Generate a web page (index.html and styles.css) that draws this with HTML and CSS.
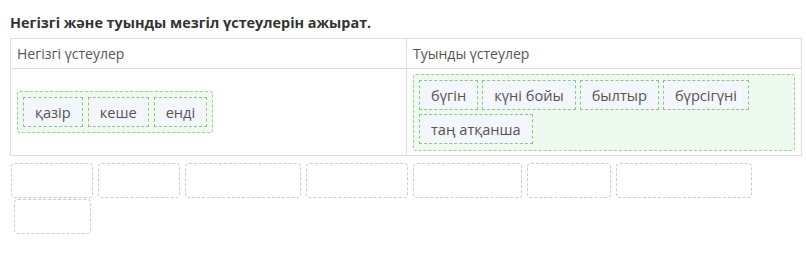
FILE: index.html
```html
<!DOCTYPE html>
<html lang="kk">
<head>
<meta charset="utf-8">
<title>Мезгіл үстеулері</title>
<link rel="stylesheet" href="styles.css">
</head>
<body>
<div class="task">
  <h1 class="task-title">Негізгі және туынды мезгіл үстеулерін ажырат.</h1>
  <table class="sort-table">
    <thead>
      <tr>
        <th class="col-head col-left">Негізгі үстеулер</th>
        <th class="col-head">Туынды үстеулер</th>
      </tr>
    </thead>
    <tbody>
      <tr>
        <td class="col-body col-left">
          <div class="drop-zone">
            <span class="chip">қазір</span>
            <span class="chip">кеше</span>
            <span class="chip">енді</span>
          </div>
        </td>
        <td class="col-body">
          <div class="drop-zone drop-zone--wide">
            <span class="chip">бүгін</span>
            <span class="chip">күні бойы</span>
            <span class="chip">былтыр</span>
            <span class="chip">бүрсігүні</span>
            <span class="chip">таң атқанша</span>
          </div>
        </td>
      </tr>
    </tbody>
  </table>
  <div class="bank">
    <div class="slot slot--82"></div>
    <div class="slot slot--82"></div>
    <div class="slot slot--116"></div>
    <div class="slot slot--102"></div>
    <div class="slot slot--109"></div>
    <div class="slot slot--84"></div>
    <div class="slot slot--136"></div>
    <div class="slot slot--77 slot--indent"></div>
  </div>
</div>
</body>
</html>
```
FILE: styles.css
```css
html, body {
  margin: 0;
  padding: 0;
  background: #fff;
}

.task {
  padding: 12px 4px 0 10px;
  font-family: "Open Sans", "Noto Sans", sans-serif;
  color: #555;
}

.task-title {
  margin: 0 0 5px 0;
  font-size: 14.4px;
  line-height: 21px;
  font-weight: 700;
  color: #333;
}

.sort-table {
  width: 792px;
  border-collapse: collapse;
  table-layout: fixed;
}

.col-head,
.col-body {
  border: 1px solid #dcdcdc;
  text-align: left;
  vertical-align: middle;
}

.col-left {
  width: 383px;
}

.col-head {
  height: 29px;
  padding: 0 6px;
  font-size: 14px;
  font-weight: 400;
  color: #555;
}

.col-body {
  height: 78px;
  padding: 4px 6px;
}

.drop-zone {
  display: inline-flex;
  flex-wrap: wrap;
  gap: 4px 5px;
  padding: 5px;
  background: #eefaf0;
  border: 1px dashed #9ccf9c;
  border-radius: 3px;
}

.drop-zone--wide {
  display: flex;
  gap: 4px;
  min-height: 65px;
  align-content: flex-start;
}

.chip {
  display: inline-block;
  height: 28px;
  line-height: 28px;
  padding: 0 11px;
  font-size: 14.6px;
  color: #555;
  background: #f3f6fa;
  border: 1px dashed #8fc48f;
}

.bank {
  display: flex;
  flex-wrap: wrap;
  gap: 1px 5px;
  margin-top: 7px;
  padding-left: 1px;
  width: 760px;
}

.slot {
  height: 35px;
  border: 1px dashed #c9ccd0;
  border-radius: 4px;
  box-sizing: border-box;
}

.slot--indent { margin-left: 3px; }
.slot--77 { width: 77px; }
.slot--82 { width: 82px; }
.slot--84 { width: 84px; }
.slot--102 { width: 102px; }
.slot--109 { width: 109px; }
.slot--116 { width: 116px; }
.slot--136 { width: 136px; }
```
